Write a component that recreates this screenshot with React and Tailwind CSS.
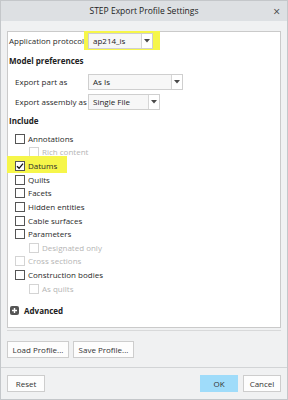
import React from "react";

const font = { fontFamily: '"Open Sans", "Noto Sans", sans-serif' };

const Arrow = () => (
  <svg width="6" height="4" viewBox="0 0 6 4" className="block">
    <path d="M0 0H6L3 3.5Z" fill="#4a4a4a" />
  </svg>
);

const Select = ({ value, w }) => (
  <div className={`flex h-[16px] ${w} border border-[#cfcfcf] bg-[#f7f7f7]`}>
    <div className="flex-1 pl-[4px] leading-[14px] text-[#222]">{value}</div>
    <div className="w-[11px] border-l border-[#d6d6d6] bg-white flex items-center justify-center">
      <Arrow />
    </div>
  </div>
);

const Check = ({ label, level = 1, disabled, checked }) => (
  <div className="flex items-center h-[13.64px]" style={{ paddingLeft: level === 1 ? 7 : 21 }}>
    <div
      className={`w-[10px] h-[10px] border bg-white flex items-center justify-center ${
        disabled ? "border-[#d4d4d4]" : "border-[#555]"
      }`}
    >
      {checked && (
        <svg width="8" height="8" viewBox="0 0 8 8">
          <path d="M1 4.2L3.1 6.3L7 1.6" fill="none" stroke="#111" strokeWidth="1.3" />
        </svg>
      )}
    </div>
    <span className={`ml-[3px] ${disabled ? "text-[#b5b5b5]" : "text-[#2a2a2a]"}`}>{label}</span>
  </div>
);

const Btn = ({ children, w, blue }) => (
  <div
    className={`h-[17px] ${w} flex items-center justify-center border text-[#333] ${
      blue ? "bg-[#9fdcfa] border-[#9fdcfa]" : "bg-[#fdfdfd] border-[#cdcdcd]"
    }`}
  >
    {children}
  </div>
);

export default function App() {
  return (
    <div className="w-[288px] h-[400px] bg-[#f0f1f2] border border-[#c4c7ca] flex flex-col text-[8px] whitespace-nowrap" style={font}>
      <div className="h-[20px] bg-[#dde0e3] relative flex items-center justify-center text-[8.5px] text-[#222]">
        STEP Export Profile Settings
        <span className="absolute right-[7px] top-[2px] text-[12px] text-[#444]">×</span>
      </div>
      <div className="px-[6px] pt-[10px]">
        <div className="h-[297px] bg-white border border-[#cacaca] flex flex-col">
          <div className="flex items-center h-[17px] pl-[1px]">
            <span className="text-[#2a2a2a] w-[75px]">Application protocol</span>
            <div className="bg-[#f6f64a] h-[19px] w-[76px] flex items-center pl-[4px]">
              <Select value="ap214_is" w="w-[65px]" />
            </div>
          </div>
          <div className="h-[20px] flex items-center pl-[1px] pt-[4px] font-bold text-[#222]">Model preferences</div>
          <div className="flex items-center h-[20px] mt-[3px] pl-[7px]">
            <span className="w-[73px] text-[#2a2a2a]">Export part as</span>
            <Select value="As Is" w="w-[95px]" />
          </div>
          <div className="flex items-center h-[19px] pl-[7px]">
            <span className="w-[73px] text-[#2a2a2a]">Export assembly as</span>
            <Select value="Single File" w="w-[72px]" />
          </div>
          <div className="h-[18px] flex items-center pl-[1px] pt-[1px] font-bold text-[#222]">Include</div>
          <div className="mt-[3px]">
            <Check label="Annotations" />
            <Check label="Rich content" level={2} disabled />
            <div className="relative">
              <div className="absolute left-[-1px] top-[-3px] w-[60px] h-[17px] bg-[#f6f64a]" />
              <div className="relative">
                <Check label="Datums" checked />
              </div>
            </div>
            <Check label="Quilts" />
            <Check label="Facets" />
            <Check label="Hidden entities" />
            <Check label="Cable surfaces" />
            <Check label="Parameters" />
            <Check label="Designated only" level={2} disabled />
            <Check label="Cross sections" disabled />
            <Check label="Construction bodies" />
            <Check label="As quilts" level={2} disabled />
          </div>
          <div className="flex items-center h-[14px] mt-[8px] pl-[2px]">
            <div className="w-[9px] h-[9px] rounded-[2px] bg-[#555] flex items-center justify-center">
              <svg width="7" height="7" viewBox="0 0 7 7">
                <path d="M3.5 1V6M1 3.5H6" stroke="#fff" strokeWidth="1.4" />
              </svg>
            </div>
            <span className="ml-[5px] font-bold text-[#222]">Advanced</span>
          </div>
        </div>
        <div className="h-px bg-[#d8d9da] mt-[2px]" />
        <div className="flex gap-[4px] mt-[10px]">
          <Btn w="w-[62px]">Load Profile...</Btn>
          <Btn w="w-[61px]">Save Profile...</Btn>
        </div>
      </div>
      <div className="mt-auto h-[32px] border-t border-[#d2d4d6] flex items-start px-[6px] pt-[7px]">
        <Btn w="w-[38px]">Reset</Btn>
        <div className="flex-1" />
        <Btn w="w-[38px]" blue>OK</Btn>
        <div className="w-[5px]" />
        <Btn w="w-[38px]">Cancel</Btn>
      </div>
    </div>
  );
}
